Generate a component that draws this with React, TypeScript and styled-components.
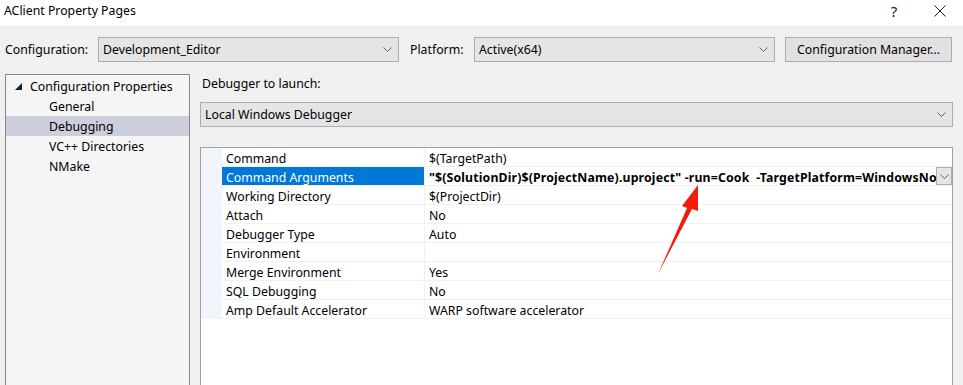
import React from 'react';
import styled, { createGlobalStyle } from 'styled-components';

const GlobalStyle = createGlobalStyle`
  html, body {
    margin: 0;
    padding: 0;
    background: #F0F0F0;
  }
  body {
    font-family: "Noto Sans", "Noto Sans CJK SC", sans-serif;
    font-size: 12.3px;
    color: #000000;
  }
`;

const Window = styled.div`
  width: 963px;
  height: 385px;
  overflow: hidden;
  background: #F0F0F0;
  display: flex;
  flex-direction: column;
  position: relative;
`;

const TitleBar = styled.div`
  height: 26px;
  background: #FFFFFF;
  display: flex;
  align-items: center;
  padding-left: 4px;
  flex-shrink: 0;
`;

const Title = styled.div`
  flex: 1;
  font-size: 12.3px;
  line-height: 20px;
  margin-top: -4px;
`;

const TitleButton = styled.div<{ $w: number }>`
  width: ${p => p.$w}px;
  height: 26px;
  display: flex;
  align-items: center;
  justify-content: center;
  color: #1a1a1a;
  font-size: 15px;
  margin-top: -4px;
`;

const Toolbar = styled.div`
  display: flex;
  align-items: center;
  padding: 11px 0 0 5px;
  height: 25px;
  flex-shrink: 0;
`;

const FieldLabel = styled.div<{ $w: number; $pad?: number }>`
  width: ${p => p.$w}px;
  padding-left: ${p => p.$pad ?? 0}px;
  flex-shrink: 0;
  line-height: 25px;
`;

const Combo = styled.div<{ $w: number }>`
  width: ${p => p.$w}px;
  height: 25px;
  box-sizing: border-box;
  background: #E5E5E5;
  border: 1px solid #ADADAD;
  display: flex;
  align-items: center;
  padding: 0 6px 0 4px;
  flex-shrink: 0;
`;

const ComboText = styled.span`
  flex: 1;
  white-space: nowrap;
  overflow: hidden;
`;

const PushButton = styled.div`
  width: 167px;
  height: 25px;
  box-sizing: border-box;
  background: #E1E1E1;
  border: 1px solid #ADADAD;
  display: flex;
  align-items: center;
  justify-content: center;
  margin-left: 10px;
`;

const Main = styled.div`
  flex: 1;
  display: flex;
  padding: 12px 0 0 5px;
  min-height: 0;
`;

const TreePanel = styled.div`
  width: 185px;
  box-sizing: border-box;
  border: 1px solid #828790;
  border-bottom: none;
  background: #F5F5F5;
  padding-top: 1px;
  flex-shrink: 0;
`;

const TreeRow = styled.div<{ $indent: number; $selected?: boolean }>`
  height: 20px;
  display: flex;
  align-items: center;
  padding-left: ${p => p.$indent}px;
  background: ${p => (p.$selected ? '#CCCEDB' : 'transparent')};
  white-space: nowrap;
`;

const Expander = styled.span`
  width: 7px;
  display: flex;
  align-items: center;
  margin-right: 8px;
`;

const RightPane = styled.div`
  margin-left: 10px;
  width: 753px;
  display: flex;
  flex-direction: column;
`;

const SectionLabel = styled.div`
  padding-left: 2px;
  line-height: 20px;
  height: 28px;
`;

const Grid = styled.div`
  margin-top: 20px;
  flex: 1;
  box-sizing: border-box;
  border: 1px solid #A0A0A0;
  border-bottom: none;
  background: #FFFFFF;
`;

const PropRow = styled.div`
  display: grid;
  grid-template-columns: 21px 202px 1fr;
  height: 19px;
`;

const Margin = styled.div`
  background: #F0F4FB;
`;

const NameCell = styled.div<{ $selected?: boolean }>`
  padding: 1px 0 0 4px;
  line-height: 19px;
  border-bottom: 1px solid #F0F0F0;
  background: ${p => (p.$selected ? '#0078D7' : '#FFFFFF')};
  color: ${p => (p.$selected ? '#FFFFFF' : '#000000')};
  white-space: nowrap;
  overflow: hidden;
`;

const ValueCell = styled.div<{ $bold?: boolean }>`
  padding-left: 4px;
  border-bottom: 1px solid #F0F0F0;
  border-left: 1px solid #F0F0F0;
  font-weight: ${p => (p.$bold ? 700 : 400)};
  letter-spacing: ${p => (p.$bold ? '0.15px' : '0')};
  white-space: nowrap;
  overflow: hidden;
  display: flex;
  min-width: 0;
`;

const ValueText = styled.span`
  flex: 1;
  overflow: hidden;
  white-space: pre;
  padding-top: 1px;
  line-height: 19px;
`;

const DropButton = styled.div`
  width: 16px;
  height: 18px;
  box-sizing: border-box;
  background: #E5E5E5;
  border: 1px solid #ADADAD;
  display: flex;
  align-items: center;
  justify-content: center;
  flex-shrink: 0;
`;

const ArrowOverlay = styled.svg`
  position: absolute;
  left: 650px;
  top: 180px;
`;

const Chevron = () => (
  <svg width="9" height="5" viewBox="0 0 9 5">
    <path d="M0.5 0.5 L4.5 4.5 L8.5 0.5" fill="none" stroke="#606060" strokeWidth="1" />
  </svg>
);

const rows: { name: string; value: string; selected?: boolean }[] = [
  { name: 'Command', value: '$(TargetPath)' },
  {
    name: 'Command Arguments',
    value: '"$(SolutionDir)$(ProjectName).uproject" -run=Cook  -TargetPlatform=WindowsNoEditor',
    selected: true,
  },
  { name: 'Working Directory', value: '$(ProjectDir)' },
  { name: 'Attach', value: 'No' },
  { name: 'Debugger Type', value: 'Auto' },
  { name: 'Environment', value: '' },
  { name: 'Merge Environment', value: 'Yes' },
  { name: 'SQL Debugging', value: 'No' },
  { name: 'Amp Default Accelerator', value: 'WARP software accelerator' },
];

export default function App() {
  return (
    <>
      <GlobalStyle />
      <Window>
        <TitleBar>
          <Title>AClient Property Pages</Title>
          <TitleButton $w={46}>?</TitleButton>
          <TitleButton $w={46}>
            <svg width="12" height="12" viewBox="0 0 12 12">
              <path d="M0.5 0.5 L11.5 11.5 M11.5 0.5 L0.5 11.5" stroke="#1a1a1a" strokeWidth="1" />
            </svg>
          </TitleButton>
        </TitleBar>

        <Toolbar>
          <FieldLabel $w={93}>Configuration:</FieldLabel>
          <Combo $w={301}>
            <ComboText>Development_Editor</ComboText>
            <Chevron />
          </Combo>
          <FieldLabel $w={64} $pad={11}>Platform:</FieldLabel>
          <Combo $w={301}>
            <ComboText>Active(x64)</ComboText>
            <Chevron />
          </Combo>
          <PushButton>Configuration Manager...</PushButton>
        </Toolbar>

        <Main>
          <TreePanel>
            <TreeRow $indent={9}>
              <Expander>
                <svg width="7" height="7" viewBox="0 0 7 7">
                  <path d="M7 0 L7 7 L0 7 Z" fill="#1e1e1e" />
                </svg>
              </Expander>
              Configuration Properties
            </TreeRow>
            <TreeRow $indent={43}>General</TreeRow>
            <TreeRow $indent={43} $selected>Debugging</TreeRow>
            <TreeRow $indent={43}>VC++ Directories</TreeRow>
            <TreeRow $indent={43}>NMake</TreeRow>
          </TreePanel>

          <RightPane>
            <SectionLabel>Debugger to launch:</SectionLabel>
            <Combo $w={753}>
              <ComboText>Local Windows Debugger</ComboText>
              <Chevron />
            </Combo>
            <Grid>
              {rows.map(r => (
                <PropRow key={r.name}>
                  <Margin />
                  <NameCell $selected={r.selected}>{r.name}</NameCell>
                  <ValueCell $bold={r.selected}>
                    <ValueText>{r.value}</ValueText>
                    {r.selected && (
                      <DropButton>
                        <Chevron />
                      </DropButton>
                    )}
                  </ValueCell>
                </PropRow>
              ))}
            </Grid>
          </RightPane>
        </Main>

        <ArrowOverlay width="60" height="100" viewBox="0 0 60 100">
          <path d="M8 94 L37 28 L32 26 L48 5 L48 31 L42 29 Z" fill="#F21B0F" />
        </ArrowOverlay>
      </Window>
    </>
  );
}
